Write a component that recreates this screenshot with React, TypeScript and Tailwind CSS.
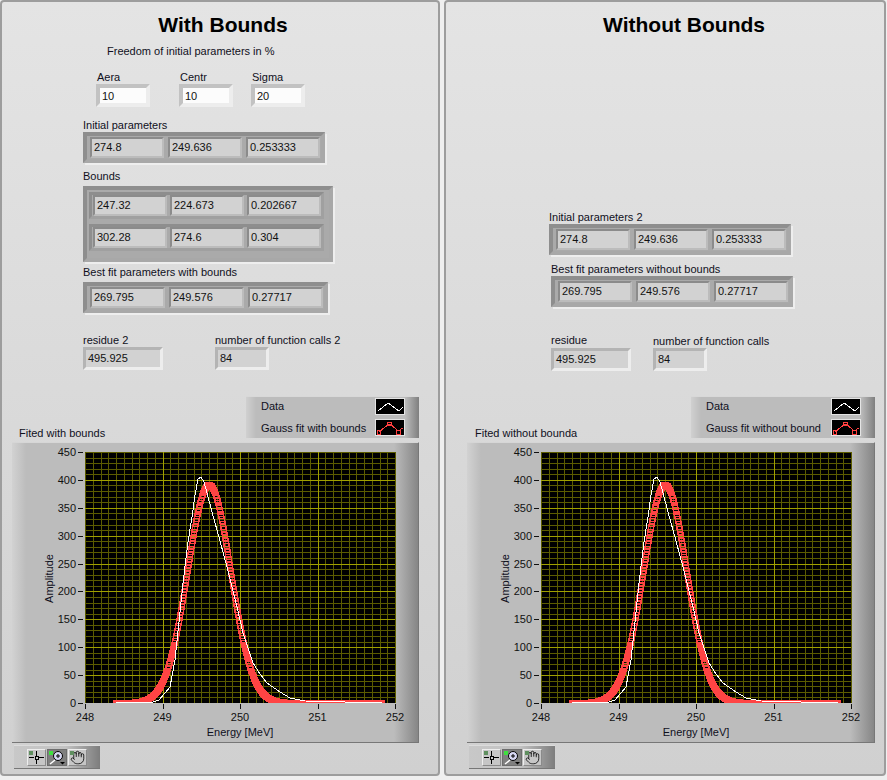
import { Hand } from "lucide-react";

const PLOT_W = 310;
const PLOT_H = 251;

// data curve, traced off the plot (plot coordinates)
const DATA_CURVE: [number, number][] = [
  [31, 250], [60, 250], [68, 250], [74, 248], [80, 241], [85, 235], [90, 208], [94, 170], [98, 131],
  [103, 90], [107, 65], [110, 43], [113, 27], [116, 25], [119, 30], [122, 41], [127, 60], [132, 78], [142, 115],
  [152, 155], [158, 181], [168, 211], [175, 222], [182, 231], [195, 240], [205, 246], [220, 249], [260, 250], [297, 250],
];

function fitPoints() {
  const pts: [number, number][] = [];
  for (let x = 31; x <= 297; x += 0.5) {
    const y = PLOT_H - 218 * Math.exp(-((x - 124) ** 2) / (2 * 21.5 ** 2));
    pts.push([Math.round(x), Math.round(y)]);
  }
  return pts;
}

function Label({ children, className = "" }: { children: React.ReactNode; className?: string }) {
  return <div className={`h-[14px] leading-[14px] text-[11px] text-[#10101c] whitespace-nowrap ${className}`}>{children}</div>;
}

function Field({ value, w }: { value: string; w: number }) {
  return (
    <div
      style={{ width: w }}
      className="h-[21px] border-2 border-t-[#8b8b8b] border-l-[#8b8b8b] border-r-[#bcbcbc] border-b-[#bcbcbc] bg-[#d2d2d2] pl-[2px] text-[11px] leading-[17px] text-[#111]"
    >
      {value}
    </div>
  );
}

function Cluster({ values, w, className = "" }: { values: string[]; w: number; className?: string }) {
  return (
    <div className={`flex w-fit gap-[4px] border-[4px] border-t-[#8e8e8e] border-l-[#8e8e8e] border-r-[#a8a8a8] border-b-[#a8a8a8] bg-[#aaaaaa] py-px pl-[3px] pr-px shadow-[2px_2px_0_#eeeeee] ${className}`}>
      {values.map((v) => (
        <Field key={v} value={v} w={w} />
      ))}
    </div>
  );
}

function Indicator({ value, w, className = "" }: { value: string; w: number; className?: string }) {
  return (
    <div
      style={{ width: w }}
      className={`h-[23px] border-[3px] border-t-[#b4b4b4] border-l-[#b4b4b4] border-r-[#ededed] border-b-[#ededed] bg-[#d2d2d2] pl-[2px] text-[11px] leading-[17px] text-[#111] ${className}`}
    >
      {value}
    </div>
  );
}

function NumInput({ label, value, className = "" }: { label: string; value: string; className?: string }) {
  return (
    <div className={className}>
      <Label className="ml-px">{label}</Label>
      <div className="h-[23px] w-[54px] border-[4px] border-t-[#c2c2c2] border-l-[#c2c2c2] border-r-[#ededed] border-b-[#ededed] bg-[#fcfcfc] pl-[2px] text-[11px] leading-[16px] text-[#111]">
        {value}
      </div>
    </div>
  );
}

function Legend({ fit, w }: { fit: string; w: number }) {
  return (
    <div
      style={{ width: w }}
      className="flex h-[42px] flex-col gap-[4px] border-t border-t-[#d8d8d8] bg-[linear-gradient(90deg,#d0d0d0_0,#bcbcbc_10px,#bcbcbc_calc(100%-14px),#7f7f7f_100%)] pl-[15px] pr-[14px] pt-[1px]"
    >
      <div className="flex items-center justify-between">
        <Label className="-mt-[2px]">Data</Label>
        <svg width="30" height="17" className="block border border-[#e4e4e4] bg-black">
          <polyline points="2,12 12,4 19,9 23,12 27,8" fill="none" stroke="#fff" shapeRendering="crispEdges" />
        </svg>
      </div>
      <div className="flex items-center justify-between">
        <Label>{fit}</Label>
        <svg width="30" height="17" className="block border border-[#e4e4e4] bg-black">
          <polyline points="3,12 9,7 14,4 20,9 22,11 27,8" fill="none" stroke="#ff4040" shapeRendering="crispEdges" />
          <rect x="1.5" y="10.5" width="3" height="4" fill="none" stroke="#ff4040" shapeRendering="crispEdges" />
          <rect x="11.5" y="2.5" width="4" height="3" fill="none" stroke="#ff4040" shapeRendering="crispEdges" />
          <rect x="20.5" y="10.5" width="4" height="4" fill="none" stroke="#ff4040" shapeRendering="crispEdges" />
        </svg>
      </div>
    </div>
  );
}

function Graph({ plotX, w }: { plotX: number; w: number }) {
  const py = 9;
  const minorX = Array.from({ length: 41 }, (_, i) => i);
  const minorY = Array.from({ length: 46 }, (_, i) => i);
  return (
    <div
      style={{ width: w }}
      className="h-[301px] border-t border-b border-t-[#d6d6d6] border-b-[#777777] border-r border-r-[#777777] bg-[linear-gradient(90deg,#d2d2d2_0,#bcbcbc_14px,#bcbcbc_calc(100%-24px),#868686_100%)]"
    >
      <svg width={w - 1} height="299" className="block text-[11px]">
        <g transform={`translate(${plotX} ${py})`}>
          <rect width={PLOT_W} height={PLOT_H} fill="#000" />
          <g shapeRendering="crispEdges" strokeWidth="1">
            {minorX.map((i) => (
              <line key={i} x1={Math.round((i * PLOT_W) / 40) + 0.5} x2={Math.round((i * PLOT_W) / 40) + 0.5} y1="0" y2={PLOT_H} stroke="#5c5c00" />
            ))}
            {minorY.map((i) => (
              <line key={i} y1={Math.round((i * PLOT_H) / 45) + 0.5} y2={Math.round((i * PLOT_H) / 45) + 0.5} x1="0" x2={PLOT_W} stroke="#5c5c00" />
            ))}
            {[1, 2, 3].map((i) => (
              <line key={i} x1={Math.round((i * PLOT_W) / 4) + 0.5} x2={Math.round((i * PLOT_W) / 4) + 0.5} y1="0" y2={PLOT_H} stroke="#a0a000" />
            ))}
            {[1, 2, 3, 4, 5, 6, 7, 8].map((i) => (
              <line key={i} y1={Math.round((i * PLOT_H) / 9) + 0.5} y2={Math.round((i * PLOT_H) / 9) + 0.5} x1="0" x2={PLOT_W} stroke="#a0a000" />
            ))}
            {fitPoints().map(([x, y], i) => (
              <rect key={i} x={x - 2.5} y={y - 2.5} width="5" height="5" fill="none" stroke="#ff4444" />
            ))}
            <polyline points={DATA_CURVE.map((p) => p.join(",")).join(" ")} fill="none" stroke="#fff" />
            <rect x={-1} y={PLOT_H} width={PLOT_W + 2} height="6" fill="#bcbcbc" />
          </g>
          {[450, 400, 350, 300, 250, 200, 150, 100, 50, 0].map((v, i) => (
            <g key={v}>
              <line x1="-7" x2="-2" y1={Math.round((i * PLOT_H) / 9) + 0.5} y2={Math.round((i * PLOT_H) / 9) + 0.5} stroke="#111" shapeRendering="crispEdges" />
              <text x="-9" y={(i * PLOT_H) / 9 + 4} textAnchor="end" fill="#111">
                {v}
              </text>
            </g>
          ))}
          {[248, 249, 250, 251, 252].map((v, i) => (
            <g key={v}>
              <line y1={PLOT_H + 1} y2={PLOT_H + 6} x1={Math.round((i * PLOT_W) / 4) + 0.5} x2={Math.round((i * PLOT_W) / 4) + 0.5} stroke="#111" shapeRendering="crispEdges" />
              <text y={PLOT_H + 18} x={(i * PLOT_W) / 4} textAnchor="middle" fill="#111">
                {v}
              </text>
            </g>
          ))}
          <text x={PLOT_W / 2} y={PLOT_H + 33} textAnchor="middle" fill="#10101c">
            Energy [MeV]
          </text>
          <text transform={`translate(-32 ${PLOT_H / 2 + 1}) rotate(-90)`} textAnchor="middle" fill="#10101c">
            Amplitude
          </text>
        </g>
      </svg>
    </div>
  );
}

function ToolBtn({ active, children }: { active?: boolean; children: React.ReactNode }) {
  return (
    <div
      className={`relative flex h-[17px] items-center justify-center border ${
        active
          ? "w-[20px] border-[#6d6d6d] bg-[#7f7f7f]"
          : "w-[19px] border-t-[#eeeeee] border-l-[#eeeeee] border-r-[#8a8a8a] border-b-[#8a8a8a] bg-[#c6c6c6]"
      }`}
    >
      <span className={`absolute left-[1px] top-[1px] h-[4px] w-[4px] ${active ? "bg-[#3fe03f]" : "bg-[#5f8f5f]"}`} />
      {children}
    </div>
  );
}

function Toolbar() {
  return (
    <div className="mt-[2px] flex h-[24px] w-[86px] items-center gap-[1px] border-t border-t-[#dcdcdc] border-b border-b-[#777777] bg-[linear-gradient(90deg,#c8c8c8_0,#c2c2c2_60%,#7d7d7d_100%)] pl-[13px]">
      <ToolBtn>
        <svg width="15" height="15" viewBox="0 0 15 15" shapeRendering="crispEdges">
          <path d="M0 7.5h5M10 7.5h5M7.5 1v4.5M7.5 9.5V14" stroke="#000" fill="none" />
          <rect x="6" y="6" width="3" height="3" fill="none" stroke="#000" />
        </svg>
      </ToolBtn>
      <ToolBtn active>
        <svg width="18" height="15" viewBox="0 0 18 15">
          <circle cx="10" cy="6" r="4.5" fill="#d8d8f4" stroke="#000" />
          <path d="M8 6h4M10 4v4" stroke="#000" fill="none" />
          <path d="M7 10l-5 4" stroke="#fff" strokeWidth="1.5" fill="none" />
          <path d="M12 12h5l-2.5 2.5z" fill="#000" />
        </svg>
      </ToolBtn>
      <ToolBtn>
        <Hand size={15} strokeWidth={1.4} color="#111" />
      </ToolBtn>
    </div>
  );
}

function Panel({ children, className = "" }: { children: React.ReactNode; className?: string }) {
  return (
    <div className={`h-[776px] rounded-[4px] border-2 border-[#9d9d9d] bg-[linear-gradient(180deg,#e4e4e4_0,#d0d0d0_100%)] ${className}`}>
      {children}
    </div>
  );
}

function Title({ children, className = "" }: { children: React.ReactNode; className?: string }) {
  return <h1 className={`mt-[10px] h-[26px] text-center text-[21px] font-bold leading-[26px] text-black ${className}`}>{children}</h1>;
}

export default function App() {
  return (
    <div className="flex h-[780px] w-[887px] overflow-hidden bg-[#efefef] font-['Liberation_Sans',sans-serif]">
      <Panel className="w-[440px]">
        <Title className="pl-[6px]">With Bounds</Title>
        <Label className="ml-[105px] mt-[6px]">Freedom of initial parameters in %</Label>
        <div className="ml-[94px] mt-[12px] flex">
          <NumInput label="Aera" value="10" />
          <NumInput label="Centr" value="10" className="ml-[29px]" />
          <NumInput label="Sigma" value="20" className="ml-[18px]" />
        </div>
        <Label className="ml-[81px] mt-[11px]">Initial parameters</Label>
        <Cluster className="ml-[81px]" w={74} values={["274.8", "249.636", "0.253333"]} />
        <Label className="ml-[81px] mt-[6px]">Bounds</Label>
        <div className="ml-[81px] mt-[3px] flex h-[76px] w-[250px] flex-col gap-[5px] border-[4px] border-t-[#8e8e8e] border-l-[#8e8e8e] border-r-[#a8a8a8] border-b-[#a8a8a8] bg-[#aaaaaa] pl-[2px] pt-[2px] shadow-[2px_2px_0_#eeeeee]">
          <div className="flex w-fit gap-[3px] border-[3px] border-t-[#8e8e8e] border-l-[#8e8e8e] border-r-[#a0a0a0] border-b-[#a0a0a0] pl-px">
            <Field value="247.32" w={74} />
            <Field value="224.673" w={74} />
            <Field value="0.202667" w={74} />
          </div>
          <div className="flex w-fit gap-[3px] border-[3px] border-t-[#8e8e8e] border-l-[#8e8e8e] border-r-[#a0a0a0] border-b-[#a0a0a0] pl-px">
            <Field value="302.28" w={74} />
            <Field value="274.6" w={74} />
            <Field value="0.304" w={74} />
          </div>
        </div>
        <Label className="ml-[81px] mt-[3px]">Best fit parameters with bounds</Label>
        <Cluster className="ml-[81px] mt-[3px]" w={75} values={["269.795", "249.576", "0.27717"]} />
        <div className="ml-[81px] mt-[20px] flex">
          <div>
            <Label>residue 2</Label>
            <Indicator value="495.925" w={80} />
          </div>
          <div className="ml-[52px]">
            <Label>number of function calls 2</Label>
            <Indicator value="84" w={54} />
          </div>
        </div>
        <div className="ml-[10px] mt-[26px] flex h-[42px] w-[407px] items-end justify-between">
          <Label className="ml-[7px] -mb-[2px]">Fited with bounds</Label>
          <Legend fit="Gauss fit with bounds" w={173} />
        </div>
        <div className="ml-[10px] mt-[4px]">
          <Graph plotX={73} w={407} />
        </div>
        <div className="ml-[12px]">
          <Toolbar />
        </div>
      </Panel>
      <Panel className="ml-[4px] w-[442px]">
        <Title className="pl-[38px]">Without Bounds</Title>
        <Label className="ml-[103px] mt-[172px]">Initial parameters 2</Label>
        <Cluster className="ml-[103px]" w={74} values={["274.8", "249.636", "0.253333"]} />
        <Label className="ml-[105px] mt-[7px]">Best fit parameters without bounds</Label>
        <Cluster className="ml-[105px]" w={74} values={["269.795", "249.576", "0.27717"]} />
        <div className="ml-[105px] mt-[26px] flex">
          <div>
            <Label>residue</Label>
            <Indicator className="mt-px" value="495.925" w={80} />
          </div>
          <div className="ml-[22px]">
            <Label className="mt-px">number of function calls</Label>
            <Indicator value="84" w={54} />
          </div>
        </div>
        <div className="ml-[21px] mt-[25px] flex h-[42px] w-[408px] items-end justify-between">
          <Label className="ml-[8px] -mb-[2px]">Fited without bounda</Label>
          <Legend fit="Gauss fit without bound" w={184} />
        </div>
        <div className="ml-[21px] mt-[4px]">
          <Graph plotX={74} w={408} />
        </div>
        <div className="ml-[23px]">
          <Toolbar />
        </div>
      </Panel>
    </div>
  );
}
